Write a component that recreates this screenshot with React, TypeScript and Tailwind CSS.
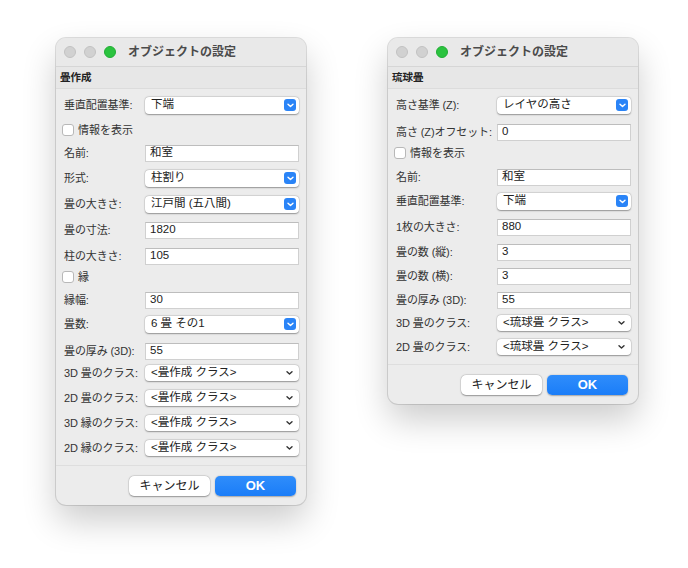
import React from "react";

const FONT = { fontFamily: '"Liberation Sans", "Noto Sans CJK JP", sans-serif' };

type Row =
  | { kind: "input"; label: string; value: string; mt: string }
  | { kind: "select"; label: string; value: string; mt: string }
  | { kind: "popup"; label: string; value: string; mt: string }
  | { kind: "check"; label: string; mt: string };

function BlueArrow() {
  return (
    <span className="absolute right-[3px] top-1/2 -translate-y-1/2 w-[12px] h-[12px] rounded-[3px] bg-[#2a84f7] flex items-center justify-center">
      <svg width="7" height="5" viewBox="0 0 7 5">
        <path d="M1 1.2 L3.5 3.6 L6 1.2" fill="none" stroke="white" strokeWidth="1.4" strokeLinecap="round" strokeLinejoin="round" />
      </svg>
    </span>
  );
}

function SmallChevron() {
  return (
    <span className="absolute right-[6px] top-1/2 -translate-y-1/2 flex items-center">
      <svg width="7" height="5" viewBox="0 0 7 5">
        <path d="M1 1.2 L3.5 3.6 L6 1.2" fill="none" stroke="#333" strokeWidth="1.4" strokeLinecap="round" strokeLinejoin="round" />
      </svg>
    </span>
  );
}

function FormRow({ row, labelW, ctrlW }: { row: Row; labelW: string; ctrlW: string }) {
  if (row.kind === "check") {
    return (
      <div className={`h-[20px] flex items-center pl-[6px] ${row.mt}`}>
        <span className="w-[12px] h-[12px] rounded-[3px] bg-white border border-[#b8b8b8] shrink-0" />
        <span className="ml-[4px] text-[11px] text-[#333]">{row.label}</span>
      </div>
    );
  }
  return (
    <div className={`h-[20px] flex items-center pl-[8px] ${row.mt}`}>
      <div className={`${labelW} shrink-0 text-[11px] text-[#333] whitespace-nowrap tracking-[-0.1px]`}>{row.label}</div>
      {row.kind === "input" && (
        <div className={`${ctrlW} h-[17px] bg-white border border-[#d0d0d0] border-t-[#bdbdbd] flex items-center pl-[4px] text-[11.5px] text-[#222]`}>
          {row.value}
        </div>
      )}
      {row.kind === "select" && (
        <div className={`${ctrlW} relative h-[17px] bg-white rounded-[4px] shadow-[0_0.5px_1.5px_rgba(0,0,0,0.35),0_0_0_0.5px_rgba(0,0,0,0.08)] flex items-center pl-[6px] text-[11.5px] text-[#222]`}>
          {row.value}
          <BlueArrow />
        </div>
      )}
      {row.kind === "popup" && (
        <div className={`${ctrlW} relative h-[16px] bg-white rounded-[4px] shadow-[0_0.5px_1.5px_rgba(0,0,0,0.35),0_0_0_0.5px_rgba(0,0,0,0.08)] flex items-center pl-[6px] text-[11.5px] text-[#222]`}>
          {row.value}
          <SmallChevron />
        </div>
      )}
    </div>
  );
}

function Window({
  header,
  rows,
  labelW,
  ctrlW,
}: {
  header: string;
  rows: Row[];
  labelW: string;
  ctrlW: string;
}) {
  return (
    <div className="w-[250px] rounded-[10px] bg-[#ececec] shadow-[0_16px_34px_rgba(0,0,0,0.2),0_0_0_1px_rgba(0,0,0,0.12)] overflow-hidden">
      <div className="h-[29px] bg-[#e9e9e9] border-b border-[#d6d6d6] flex items-center pl-[8px]">
        <span className="w-[12px] h-[12px] rounded-full bg-[#d1d1d1] border border-[#c2c2c2]" />
        <span className="ml-[8px] w-[12px] h-[12px] rounded-full bg-[#d1d1d1] border border-[#c2c2c2]" />
        <span className="ml-[8px] w-[12px] h-[12px] rounded-full bg-[#2bc33f] border border-[#22ad35]" />
        <span className="ml-[12px] text-[12px] font-bold text-[#4b4b4b]">オブジェクトの設定</span>
      </div>
      <div className="h-[22px] bg-[#e7e7e7] border-b border-[#dcdcdc] flex items-center pl-[4px] text-[10.5px] font-bold text-[#222]">
        {header}
      </div>
      <div className="pt-[6px] pb-[7px] border-b border-[#dedede]">
        {rows.map((r, i) => (
          <FormRow key={i} row={r} labelW={labelW} ctrlW={ctrlW} />
        ))}
      </div>
      <div className="flex justify-end gap-[5px] pr-[10px] pt-[10px] pb-[9px]">
        <div className="w-[81px] h-[20px] rounded-[5px] bg-white shadow-[0_0.5px_1.5px_rgba(0,0,0,0.35),0_0_0_0.5px_rgba(0,0,0,0.08)] flex items-center justify-center text-[12px] text-[#222]">
          キャンセル
        </div>
        <div className="w-[81px] h-[20px] rounded-[5px] bg-gradient-to-b from-[#2f8dfb] to-[#1a7df8] shadow-[0_0.5px_1.5px_rgba(0,0,0,0.3)] flex items-center justify-center text-[13px] font-bold text-white">
          OK
        </div>
      </div>
    </div>
  );
}

const rows1: Row[] = [
  { kind: "select", label: "垂直配置基準:", value: "下端", mt: "mt-0" },
  { kind: "check", label: "情報を表示", mt: "mt-[5px]" },
  { kind: "input", label: "名前:", value: "和室", mt: "mt-[3px]" },
  { kind: "select", label: "形式:", value: "柱割り", mt: "mt-[5px]" },
  { kind: "select", label: "畳の大きさ:", value: "江戸間 (五八間)", mt: "mt-[6px]" },
  { kind: "input", label: "畳の寸法:", value: "1820", mt: "mt-[6px]" },
  { kind: "input", label: "柱の大きさ:", value: "105", mt: "mt-[6px]" },
  { kind: "check", label: "縁", mt: "mt-[1px]" },
  { kind: "input", label: "縁幅:", value: "30", mt: "mt-[3px]" },
  { kind: "select", label: "畳数:", value: "6 畳 その1", mt: "mt-[4px]" },
  { kind: "input", label: "畳の厚み (3D):", value: "55", mt: "mt-[7px]" },
  { kind: "popup", label: "3D 畳のクラス:", value: "<畳作成 クラス>", mt: "mt-[2px]" },
  { kind: "popup", label: "2D 畳のクラス:", value: "<畳作成 クラス>", mt: "mt-[5px]" },
  { kind: "popup", label: "3D 縁のクラス:", value: "<畳作成 クラス>", mt: "mt-[5px]" },
  { kind: "popup", label: "2D 縁のクラス:", value: "<畳作成 クラス>", mt: "mt-[5px]" },
];

const rows2: Row[] = [
  { kind: "select", label: "高さ基準 (Z):", value: "レイヤの高さ", mt: "mt-0" },
  { kind: "input", label: "高さ (Z)オフセット:", value: "0", mt: "mt-[7px]" },
  { kind: "check", label: "情報を表示", mt: "mt-[1px]" },
  { kind: "input", label: "名前:", value: "和室", mt: "mt-[4px]" },
  { kind: "select", label: "垂直配置基準:", value: "下端", mt: "mt-[4px]" },
  { kind: "input", label: "1枚の大きさ:", value: "880", mt: "mt-[6px]" },
  { kind: "input", label: "畳の数 (縦):", value: "3", mt: "mt-[5px]" },
  { kind: "input", label: "畳の数 (横):", value: "3", mt: "mt-[4px]" },
  { kind: "input", label: "畳の厚み (3D):", value: "55", mt: "mt-[4px]" },
  { kind: "popup", label: "3D 畳のクラス:", value: "<琉球畳 クラス>", mt: "mt-[3px]" },
  { kind: "popup", label: "2D 畳のクラス:", value: "<琉球畳 クラス>", mt: "mt-[4px]" },
];

export default function App() {
  return (
    <div className="w-[688px] h-[568px] bg-white flex items-start gap-[82px] pl-[56px] pt-[38px]" style={FONT}>
      <Window header="畳作成" rows={rows1} labelW="w-[81px]" ctrlW="w-[154px]" />
      <Window header="琉球畳" rows={rows2} labelW="w-[101px]" ctrlW="w-[134px]" />
    </div>
  );
}
